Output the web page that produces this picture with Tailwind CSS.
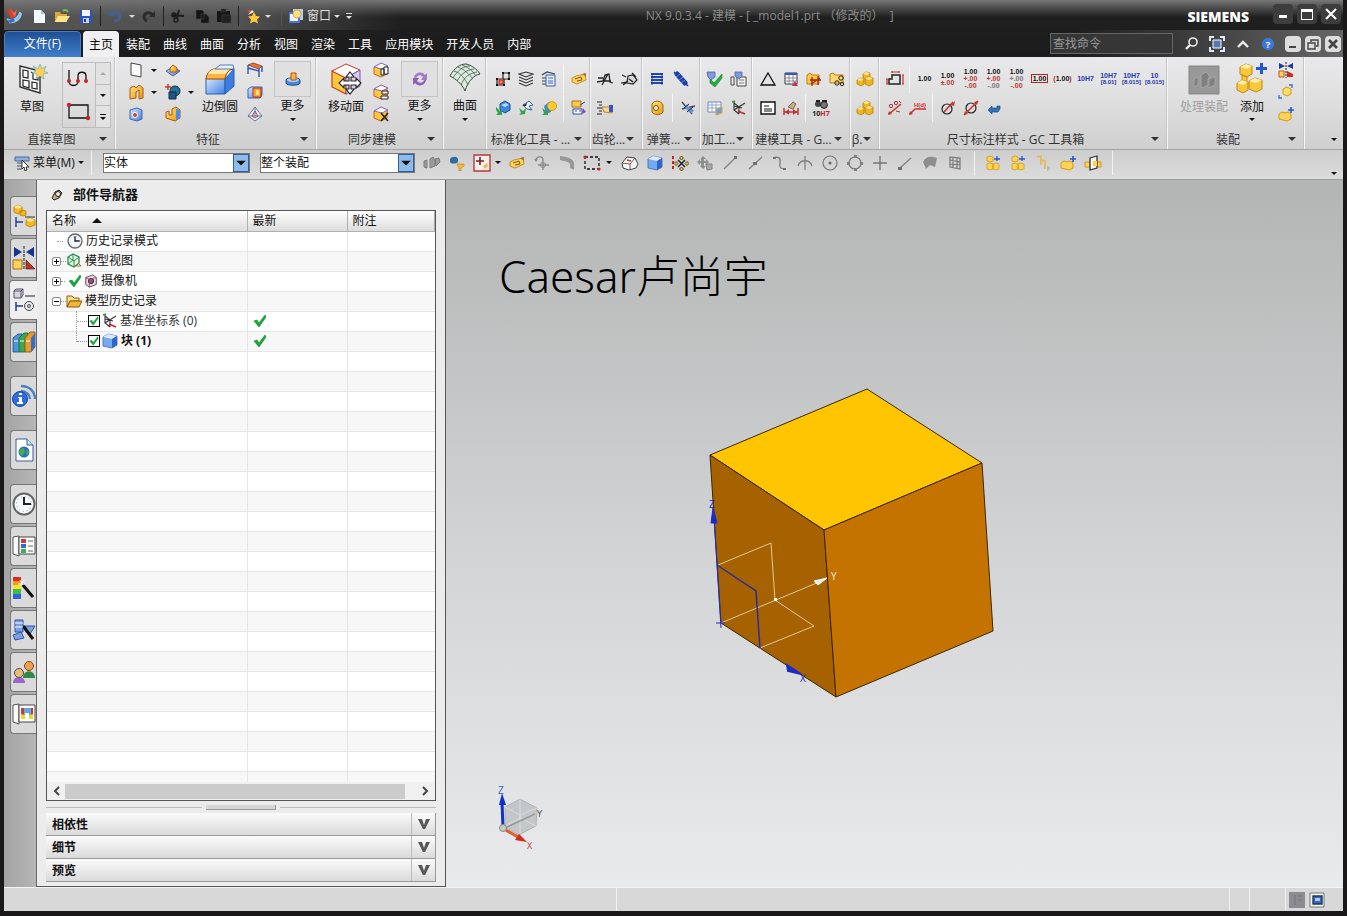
<!DOCTYPE html>
<html lang="zh-CN">
<head>
  <meta charset="UTF-8" />
  <meta name="viewport" content="width=device-width, initial-scale=1.0" />
  <title>NX 9.0.3.4 - 建模 - [_model1.prt （修改的） ]</title>
  <script src="https://cdn.jsdelivr.net/npm/@tailwindcss/browser@4"></script>
</head>
<body class="flex h-screen flex-col overflow-hidden bg-[#1a1819] px-1 pb-[5px] font-['Open_Sans','Noto_Sans_CJK_SC',sans-serif] text-xs text-[#111]">

<!-- icon sprite, kept rendered so its gradients stay usable -->
<svg class="absolute size-0" aria-hidden="true">
  <defs>
    <linearGradient id="gBlue" x1="0" y1="0" x2="1" y2="1"><stop offset="0" stop-color="#dcebff"/><stop offset="1" stop-color="#3f7fe0"/></linearGradient>
    <linearGradient id="gGold" x1="0" y1="0" x2="1" y2="1"><stop offset="0" stop-color="#ffe680"/><stop offset="1" stop-color="#e8960c"/></linearGradient>
  </defs>
  <symbol id="caret" viewBox="0 0 8 4"><path d="M0 0h8L4 4z" fill="currentColor"/></symbol>
  <symbol id="nx" viewBox="0 0 16 16"><path d="M1 11c4 3 12 0 13-7M3 14c6 1 12-3 12-9" stroke="#8fc4f5" stroke-width="2" fill="none"/><path d="M2 13l5-3 2 3-5 2z" fill="#2f6fc8"/><path d="M1 2l5-1 4 7-5 3z" fill="#d8402c"/><path d="M4 1l4 4 3-4-2 8z" fill="#f07050"/></symbol>
  <symbol id="new" viewBox="0 0 16 16"><path d="M3 2h7l4 4v9H3z" fill="#f4f9ff"/><path d="M10 2v4h4z" fill="#9cc0ea"/></symbol>
  <symbol id="open" viewBox="0 0 16 16"><path d="M1 4h5l1 2h6v8H1z" fill="#d9a63a"/><path d="M4 8h12l-4 6H1z" fill="#ffe28a"/><path d="M9 3c2-2 4-1 5 1" stroke="#7bbf4a" stroke-width="2" fill="none"/></symbol>
  <symbol id="save" viewBox="0 0 16 16"><path d="M2 2h12v13H2z" fill="#2c54c4"/><path d="M4 2h8v6H4z" fill="#f3f6ff"/><path d="M5 10h6v5H5z" fill="#c9d3ee"/><path d="M6 11h2v3H6z" fill="#223a80"/></symbol>
  <symbol id="undo" viewBox="0 0 16 16"><path d="M2 2v6h6z" fill="#44618f"/><path d="M4 7c4-5 9-3 9 1 0 3-3 5-6 5" fill="none" stroke="#44618f" stroke-width="3"/></symbol>
  <symbol id="redo" viewBox="0 0 16 16"><path d="M14 3v6H8z" fill="#2c2c2c"/><path d="M12 7C8 3 3 5 3 9c0 2 1 3 3 4" fill="none" stroke="#2c2c2c" stroke-width="3"/></symbol>
  <symbol id="cut" viewBox="0 0 16 16"><path d="M9 2L7 10M2 7l12 1" stroke="#1c1c1c" stroke-width="2"/><circle cx="6" cy="12" r="2" fill="none" stroke="#1c1c1c" stroke-width="1.5"/><circle cx="4" cy="7" r="2" fill="none" stroke="#1c1c1c" stroke-width="1.5"/></symbol>
  <symbol id="copy" viewBox="0 0 16 16"><path d="M2 2h6l2 2v7H2zM7 6h5l3 3v6H7z" fill="#151515" stroke="#4a4a4a" stroke-width=".6"/></symbol>
  <symbol id="paste" viewBox="0 0 16 16"><path d="M1 3h13v11H1z" fill="#171717"/><path d="M5 1h5v3H5zM6 7h9v8H6z" fill="#202020" stroke="#444" stroke-width=".5"/></symbol>
  <symbol id="star" viewBox="0 0 16 16"><path d="M2 2l6 1-3 3z" fill="#e04a2a"/><path d="M3 7l4-5 2 2" fill="#f3efe6"/><path d="M9 4l2 4 4 .5-3 3 1 4-4-2-4 2 1-4-3-3 4-.5z" fill="#ffc93a"/></symbol>
  <symbol id="win" viewBox="0 0 16 16"><path d="M5 1h10v11H5z" fill="#b7cdf5"/><path d="M1 4h11v11H1z" fill="#4e74d8"/><path d="M2 6h8v7H2z" fill="#eef3ff"/><circle cx="9" cy="6" r="4" fill="#ffe27a" stroke="#b98a10" stroke-width=".6"/></symbol>
  <symbol id="search" viewBox="0 0 16 16"><circle cx="10" cy="6" r="4" fill="none" stroke="#eee" stroke-width="1.6"/><path d="M7 9l-4 4" stroke="#eee" stroke-width="2.4"/></symbol>
  <symbol id="full" viewBox="0 0 16 16"><path d="M1 5V1h4M11 1h4v4M15 11v4h-4M5 15H1v-4" fill="none" stroke="#dfe9ff" stroke-width="2"/><path d="M4 4h8v8H4z" fill="#5577b5" stroke="#fff"/></symbol>
  <symbol id="help" viewBox="0 0 16 16"><circle cx="8" cy="8" r="7" fill="#3b78d8"/><text x="8" y="12" font-size="11" font-weight="700" text-anchor="middle" fill="#fff">?</text></symbol>

  <symbol id="sketch" viewBox="0 0 32 32"><path d="M4 3l20 5v22L4 24z" fill="#f2f2f2" stroke="#333" stroke-width="1.4"/><path d="M7 7l5 1v7l-5-1zM15 9l2 1v6l5 1v-4M7 17l6 1v7l-6-2zM16 19l5 1v6l-5-1z" fill="#fff" stroke="#222" stroke-width="1.2"/><path d="M24 1l2 5 4-3-2 5 4 2-5 1 1 5-4-3-4 3 1-5-5-1 4-2-3-5 5 3z" fill="#ffd24a" stroke="#4aa6e8" stroke-width=".6"/></symbol>
  <symbol id="spline" viewBox="0 0 26 22"><path d="M3 2v11c0 6 9 6 9 0V8c0-5 8-5 8 0v5" fill="none" stroke="#111" stroke-width="1.3"/><circle cx="3" cy="13" r="2" fill="#c8202c"/><circle cx="12" cy="13" r="2" fill="#c8202c"/><circle cx="20" cy="13" r="2" fill="#c8202c"/></symbol>
  <symbol id="rect" viewBox="0 0 26 20"><path d="M3 4h19v13H3z" fill="none" stroke="#111" stroke-width="1.3"/><circle cx="3" cy="4" r="2.2" fill="#c8202c"/><circle cx="22" cy="17" r="2.2" fill="#c8202c"/></symbol>
  <symbol id="plane" viewBox="0 0 16 16"><path d="M3 1l10 2v12L3 13z" fill="#fafafa" stroke="#444"/></symbol>
  <symbol id="extrude" viewBox="0 0 16 16"><path d="M2 4l4-2 2 2 3-3 4 3v10l-4 1V6L8 8v6l-6 1z" fill="url(#gGold)" stroke="#b0560c"/></symbol>
  <symbol id="hole" viewBox="0 0 16 16"><path d="M2 4l7-2 5 2v9l-5 2-7-2z" fill="url(#gBlue)" stroke="#3465b8"/><circle cx="7" cy="9" r="2.6" fill="#c84b3a" stroke="#fff"/></symbol>
  <symbol id="boss" viewBox="0 0 16 16"><path d="M1 9l7-4 7 4-7 5z" fill="url(#gBlue)" stroke="#3465b8"/><path d="M5 6l3-3 4 3v4H5z" fill="url(#gGold)" stroke="#b0560c"/></symbol>
  <symbol id="unite" viewBox="0 0 16 16"><circle cx="10" cy="7" r="5" fill="#2a6e98" stroke="#0c2f48"/><path d="M4 8h7v7H4z" fill="#1d5680" stroke="#0c2f48"/><path d="M0 3h6M3 0v6" stroke="#d13a1c" stroke-width="1.4"/></symbol>
  <symbol id="shell" viewBox="0 0 16 16"><path d="M1 6l3-1v4h3V3l4-2 4 3v8l-5 3-9-3z" fill="url(#gGold)" stroke="#b0560c"/><path d="M11 3l4 1v8l-4 2z" fill="#4f8ce8"/></symbol>
  <symbol id="blend" viewBox="0 0 32 32"><path d="M2 15h19v16H2z" fill="url(#gBlue)" stroke="#2860b0"/><path d="M21 16l9-10v17l-9 8z" fill="#3b7de0" stroke="#2860b0"/><path d="M2 16C3 9 7 6 11 6h19c-5 0-8 4-9 10z" fill="#ffb341" stroke="#8a4a00"/><path d="M4 11c2-4 5-5 8-5h17c-4 0-6 2-7 5z" fill="#ffe7a8"/><path d="M11 6l5-4h13l1 4z" fill="#e6f0fc" stroke="#2860b0" stroke-width=".8"/></symbol>
  <symbol id="draft" viewBox="0 0 16 16"><path d="M1 3l5-2 9 3-3 3z" fill="#e8743a" stroke="#7a3010" stroke-width=".7"/><path d="M1 3v9M12 7v8M1 6l11 3M15 4v6" stroke="#2d54b8" stroke-width="1.4"/></symbol>
  <symbol id="trim" viewBox="0 0 16 16"><path d="M1 5l3-2h11v8l-2 3H1z" fill="url(#gBlue)" stroke="#3465b8"/><path d="M6 4h8v9H6z" fill="#ff9f2e" stroke="#c22d1a"/><path d="M9 6h3v5H9z" fill="#ffe27a"/></symbol>
  <symbol id="scale" viewBox="0 0 16 16"><path d="M8 1l7 9-7 5-7-5z" fill="#eef3fb" stroke="#6a7a94"/><path d="M8 5l3 5-3 2-3-2z" fill="#f7e0d4" stroke="#c04830"/><path d="M8 1v9l7 0M8 10l-7 0" fill="none" stroke="#3465b8" stroke-width=".8"/></symbol>
  <symbol id="more" viewBox="0 0 16 16"><path d="M1 9c0-3 14-3 14 0v3c0 3-14 3-14 0z" fill="#4b86d8" stroke="#204c94"/><ellipse cx="8" cy="9" rx="6" ry="2" fill="#a9ccf8"/><path d="M6 2h5v7H6z" fill="#ffb341" stroke="#b0560c"/></symbol>
  <symbol id="moveface" viewBox="0 0 32 32"><path d="M2 8l14 7v16L2 24z" fill="#ffc83a" stroke="#c83a20" stroke-width="1.2"/><path d="M2 8l14-7 14 6-14 8z" fill="#fdfdfd" stroke="#c83a20"/><path d="M16 15l14-8v16l-14 8z" fill="#d9caf0" stroke="#7a56b0"/><path d="M20 9l4 5h-3v4h5v-3l5 5-5 5v-3h-5v4h3l-4 5-4-5h3v-4h-5v3l-5-5 5-5v3h5v-4h-3z" fill="#fff" stroke="#222" stroke-width="1.1"/></symbol>
  <symbol id="face" viewBox="0 0 16 16"><path d="M1 5l7-3 6 2v8l-6 3-7-3z" fill="#ffc83a" stroke="#d0602a"/><path d="M1 5l7-4 7 3-6 3z" fill="#fff" stroke="#8a60b8"/></symbol>
  <symbol id="refresh" viewBox="0 0 20 20"><path d="M4 9c1-6 8-7 11-3l2-2v7h-6l2-3c-3-3-6-2-7 2z" fill="#a07cc8"/><path d="M16 11c-1 6-8 7-11 3l-2 2V9h6l-2 3c3 3 6 2 7-1z" fill="#8a62b8"/></symbol>
  <symbol id="surface" viewBox="0 0 32 32"><path d="M1 14C5 6 11 2 17 2c5 1 11 5 14 10-6 1-12 7-15 17C13 22 7 17 1 14z" fill="#dcebdf" stroke="#3a4a3c"/><path d="M5 9c7 2 11 8 14 14M9 5c7 3 11 7 15 12M13 3c6 2 11 6 14 11M4 16C8 9 14 4 21 4M8 19C12 12 17 8 25 7M12 23c3-8 9-12 16-13" fill="none" stroke="#4d5a4f" stroke-width=".8"/></symbol>

  <symbol id="attr" viewBox="0 0 16 16"><path d="M8 2h6v6H8zM2 8h7v6H2z" fill="none" stroke="#222" stroke-width="1.2"/><path d="M4 9h4v4H4z" fill="#f08040" stroke="#c22"/><path d="M7 1h2v2H7zM13 1h2v2h-2zM13 7h2v2h-2zM1 7h2v2H1zM1 13h2v2H1zM8 13h2v2H8z" fill="#111"/></symbol>
  <symbol id="layers" viewBox="0 0 16 16"><path d="M1 3l7-2 7 2-7 3zM1 6l7 3 7-3M1 9l7 3 7-3M1 12l7 3 7-3" fill="none" stroke="#333" stroke-width="1.1"/></symbol>
  <symbol id="layerdoc" viewBox="0 0 16 16"><path d="M1 4l5-3 8 2M1 7h4M1 10h4M1 13h4" fill="none" stroke="#345" stroke-width="1.2"/><path d="M5 4h9v11H5z" fill="#e3ecfb" stroke="#3e5f9e"/><path d="M7 7h5M7 10h5M7 12h5" stroke="#3e6fc0"/></symbol>
  <symbol id="hand" viewBox="0 0 16 16"><path d="M1 7l4-2 9-2 1 6-9 4-5-2z" fill="#ffd35a" stroke="#b77c10" stroke-width=".8"/><path d="M4 8l6-2 1 3-5 1" stroke="#8a5a10" fill="none"/><path d="M11 3l4-1v4z" fill="#9c7440"/></symbol>
  <symbol id="greenblue" viewBox="0 0 16 16"><path d="M5 4l5-3 5 3v6l-5 3-5-3z" fill="#3d86dd" stroke="#1c4f98"/><path d="M6 5l5-2 3 2-4 2z" fill="#b4d8ff"/><path d="M1 7l4 4 2-2v6H1l2-2-2-3z" fill="#35a34a"/></symbol>
  <symbol id="greengold" viewBox="0 0 16 16"><path d="M3 6l5-4 2 4v6l-5 2z" fill="#3d86dd"/><circle cx="11" cy="6" r="4.500" fill="#ffca2e" stroke="#d39a10"/><path d="M1 8l4 3 2-2v6H1l2-2z" fill="#35a34a"/></symbol>
  <symbol id="greenwing" viewBox="0 0 16 16"><path d="M5 5l6-4 4 4-4 1 3 4-5-1z" fill="#eef4ff" stroke="#2a5fb4"/><path d="M4 6l5-3-1 3z" fill="#222"/><path d="M1 8l4 3 3-3-1 6-6 1 2-2z" fill="#35a34a"/></symbol>
  <symbol id="export" viewBox="0 0 16 16"><path d="M1 1h9v6H1z" fill="#ffca4a" stroke="#b0700c"/><path d="M2 9h9v5H2z" fill="#fff" stroke="#2846a8"/><path d="M4 11h2M8 11h2M9 5l5-3" stroke="#2846a8"/><path d="M12 8l3 4-4 2z" fill="#8a50b8"/></symbol>
  <symbol id="gear1" viewBox="0 0 18 16"><path d="M1 11l6-1 2-6 4-1 1 8 3 1M2 7h5M6 14l6-11M8 10h7" fill="none" stroke="#222" stroke-width="1.3"/></symbol>
  <symbol id="gear2" viewBox="0 0 18 16"><path d="M2 4l4 2M1 12l6-1 1-6 5-1 4 5-4 4-6-1z" fill="#d8d8d8" stroke="#222" stroke-width="1.2"/><path d="M3 14l5-4M12 2l4 4M9 8l4 3" stroke="#222" stroke-width="1.3"/></symbol>
  <symbol id="gearfind" viewBox="0 0 18 16"><path d="M1 2h5M3 5h3M1 8h5M3 11h3M1 14h5" stroke="#222" stroke-width="1.2"/><path d="M6 7h7l3-2v8l-8-1z" fill="#ffd78a" stroke="#a0702a" stroke-width=".8"/><path d="M13 5h4v7h-4z" fill="#3a55c0"/></symbol>
  <symbol id="spring" viewBox="0 0 16 16"><path d="M2 3h12M2 6h12M2 9h12M2 12h12" stroke="#2247b8" stroke-width="2"/><path d="M3 2v12M13 2v12" stroke="#16307c" stroke-width=".8"/></symbol>
  <symbol id="spring2" viewBox="0 0 16 16"><path d="M4 3l8 9" stroke="#1c3fa8" stroke-width="5" stroke-linecap="round"/><path d="M3 6l4-3M6 9l4-3M8 12l4-3" stroke="#7fa0f0" stroke-width=".8"/><path d="M1 1l2 2M13 13l2 2" stroke="#1c3fa8" stroke-width="1.5"/></symbol>
  <symbol id="disc" viewBox="0 0 16 16"><path d="M3 4c2-4 9-4 11 1v7c-3 4-9 3-11 0z" fill="url(#gGold)" stroke="#9a6a08"/><circle cx="7" cy="8" r="2.500" fill="#fff3c8" stroke="#7a4a00"/></symbol>
  <symbol id="delspring" viewBox="0 0 16 16"><path d="M2 2l10 12M15 6L2 9" stroke="#445" stroke-width="1.3"/><path d="M5 6l8 6" stroke="#6a9ad0" stroke-width="4"/><path d="M4 8l5-4M7 12l6-5" stroke="#223"/></symbol>
  <symbol id="chkgreen" viewBox="0 0 18 16"><path d="M1 1h8v5l-4 3-3-3z" fill="#7f9be0" stroke="#4456a0" stroke-width=".7"/><path d="M4 8l4 4 8-9v4l-7 9-5-4z" fill="#1fb03c" stroke="#108028" stroke-width=".6"/></symbol>
  <symbol id="cadimg" viewBox="0 0 18 16"><path d="M1 6h3v8H1zM7 6h9v9H7z" fill="#f2f2f2" stroke="#444"/><path d="M9 9h5M9 12h5" stroke="#777"/><path d="M5 1h7v4l-3 3-4-3z" fill="#7f9be0" stroke="#4456a0" stroke-width=".7"/></symbol>
  <symbol id="grid" viewBox="0 0 16 16"><path d="M1 2h13v10H1z" fill="#fff" stroke="#6c86c0"/><path d="M1 5h13M1 8h13M5 2v10M9 2v10" stroke="#8fa6d8"/><path d="M9 9l6-2v6l-6 2z" fill="#6aa2e8" stroke="#e8a020"/></symbol>
  <symbol id="csys" viewBox="0 0 16 16"><path d="M3 1v9l5 4M3 10l11-7M3 3l5 4v7M3 6l8 2" fill="none" stroke="#333" stroke-width="1.1"/><path d="M7 11l7 3" stroke="#c8202c" stroke-width="1.4"/><path d="M1 2l3-1" stroke="#2a9a3a" stroke-width="1.4"/></symbol>
  <symbol id="tri" viewBox="0 0 16 16"><path d="M8 2l7 12H1z" fill="none" stroke="#111" stroke-width="1.3"/></symbol>
  <symbol id="tbl" viewBox="0 0 16 16"><path d="M2 2h12v11H2z" fill="#fff" stroke="#334"/><path d="M2 3h12" stroke="#2b5cc8" stroke-width="2"/><path d="M2 7h12M2 10h12M6 4v9M10 4v9" stroke="#889"/><path d="M9 15l3-5 3 5z" fill="#c8303c"/></symbol>
  <symbol id="orgpart" viewBox="0 0 16 16"><path d="M1 4l3-2 2 2h7v9H1z" fill="#ffca4a" stroke="#c07a10"/><path d="M6 6v9M12 5v9M4 9h11M5 13l9-6" stroke="#a02810" stroke-width="1.3"/></symbol>
  <symbol id="cfgpart" viewBox="0 0 16 16"><path d="M1 3l3-1 2 2h8v8H1z" fill="#ffd873" stroke="#c07a10"/><circle cx="12" cy="7" r="2.200" fill="none" stroke="#222"/><circle cx="8" cy="12" r="2.200" fill="none" stroke="#222"/><circle cx="13" cy="13" r="1.700" fill="none" stroke="#222"/></symbol>
  <symbol id="note" viewBox="0 0 16 16"><path d="M1 2h14v12H1z" fill="#fff" stroke="#111" stroke-width="1.4"/><path d="M4 6h5M4 9h8M4 11h8" stroke="#111"/></symbol>
  <symbol id="dimbrush" viewBox="0 0 16 16"><path d="M1 8v7M15 8v7M1 12h14" stroke="#c8302c" stroke-width="1.5"/><path d="M2 12l4-3v6zM14 12l-4-3v6z" fill="#c8302c"/><path d="M5 7l5-5 3 2-3 5z" fill="#d0b068" stroke="#6a6a6a"/></symbol>
  <symbol id="find10" viewBox="0 0 18 18"><circle cx="6" cy="5" r="3" fill="#444"/><circle cx="12" cy="6" r="3.400" fill="#777" stroke="#222"/><path d="M4 2h4M10 2h5" stroke="#222" stroke-width="2"/><text x="9" y="17" font-size="7" font-weight="700" text-anchor="middle"><tspan fill="#222">10</tspan><tspan fill="#c8202c">H7</tspan></text></symbol>
  <symbol id="cubes" viewBox="0 0 18 16"><path d="M7 3l3-2 4 1v5l-3 2-4-2zM1 9l3-2 4 1v5l-3 2-4-2zM9 8l3-2 5 1v6l-4 2-4-2z" fill="#f2b51c" stroke="#b87c08" stroke-width=".8"/><path d="M7 3l3-2 4 1-3 2zM1 9l3-2 4 1-3 2zM9 8l3-2 5 1-4 2z" fill="#ffe796"/></symbol>
  <symbol id="dimstep" viewBox="0 0 18 16"><path d="M6 4v4H3v5h11V4z" fill="none" stroke="#222" stroke-width="1.5"/><path d="M6 1h7M6 0v2M13 0v2M1 8v5M17 4v9M0 8h2M0 13h2M16 4h2M16 13h2" stroke="#c8302c" stroke-width="1.2"/></symbol>
  <symbol id="dimang" viewBox="0 0 16 16"><path d="M2 14L14 4" stroke="#c8302c" stroke-width="1.6"/><path d="M1 15l1-4 3 3z" fill="#c8302c"/><circle cx="4" cy="6" r="1.700" fill="none" stroke="#b03028"/><circle cx="9" cy="3" r="1.700" fill="none" stroke="#b03028"/><path d="M9 11l4 1M12 1l2 2" stroke="#b03028"/></symbol>
  <symbol id="dimlead" viewBox="0 0 18 16"><path d="M1 14l5-5h11" fill="none" stroke="#c8302c" stroke-width="1.5"/><path d="M0 15l1-4 3 3z" fill="#c8302c"/><text x="11" y="7" font-size="6" font-weight="700" text-anchor="middle" fill="#c8302c">H(d)</text></symbol>
  <symbol id="dia1" viewBox="0 0 16 16"><circle cx="7" cy="9" r="5" fill="none" stroke="#222" stroke-width="1.200"/><path d="M4 12l9-10" stroke="#c8302c" stroke-width="1.600"/><path d="M11 5l4-4-1 5z" fill="#c8302c"/></symbol>
  <symbol id="dia2" viewBox="0 0 16 16"><circle cx="8" cy="8" r="5" fill="none" stroke="#222" stroke-width="1.200"/><path d="M1 15L15 1" stroke="#c8302c" stroke-width="1.500"/><path d="M11 2l4-1-1 4zM1 15l1-4 3 3z" fill="#c8302c"/></symbol>
  <symbol id="swap" viewBox="0 0 16 16"><path d="M2 10l4-4v2h5V6h3v3l-2 3H6v2z" fill="#2f74b8" stroke="#174a80" stroke-width=".7"/></symbol>
  <symbol id="asmadd" viewBox="0 0 32 32"><path d="M4 5l6-3 6 2v8l-5 3-7-3zM1 21l5-3 6 2v8l-5 3-6-3zM13 19l6-3 7 2v9l-6 3-7-3zM6 13l5 2v6l-5-2z" fill="#f7c83c" stroke="#c08a10"/><path d="M4 5l6-3 6 2-5 3zM1 21l5-3 6 2-5 3zM13 19l6-3 7 2-6 3z" fill="#fff0b0"/><path d="M24 1h3v4h4v3h-4v4h-3V8h-4V5h4z" fill="#2458d0"/></symbol>
  <symbol id="mirror" viewBox="0 0 16 16"><path d="M1 1l6 3-6 3zM15 1L9 4l6 3z" fill="#1b3c9c"/><path d="M8 0v16" stroke="#222" stroke-dasharray="2 1"/><path d="M1 9h5v6H1z" fill="#ffd35a" stroke="#c8501c"/><path d="M9 9l6 3v3H9z" fill="#c8301c"/></symbol>
  <symbol id="rotcube" viewBox="0 0 16 16"><path d="M5 5l4-2 4 2v5l-4 2-4-2z" fill="#ffdb6a" stroke="#d39a10"/><path d="M11 1h3v3M1 11v3h3" fill="none" stroke="#3a68c8" stroke-width="1.300"/></symbol>
  <symbol id="cubeplus" viewBox="0 0 16 16"><path d="M1 8l3-2 3 1 3-1 3 2v5l-4 2-4-1-4-1z" fill="#ffd35a" stroke="#d39a10"/><path d="M13 1v6M10 4h6" stroke="#2458d0" stroke-width="1.600"/></symbol>

  <symbol id="menu" viewBox="0 0 16 16"><path d="M1 2h14v4H1z" fill="#8fb0dc" stroke="#4a6a9c"/><path d="M3 8h5M3 11h5M3 14h5" stroke="#456" stroke-width="1.200"/><path d="M8 5l7 7h-3l1 3-2 1-1-4-2 2z" fill="#fff" stroke="#222" stroke-width=".9"/></symbol>
  <symbol id="grayasm" viewBox="0 0 18 16"><path d="M1 6l3-1v8l-3-1zM7 4l3-2 2 3v6l-5 2zM12 4l4-1 1 4-4 4z" fill="#9a9a9a" stroke="#7d7d7d"/></symbol>
  <symbol id="bluegold" viewBox="0 0 16 16"><path d="M1 4c2-3 7-3 8 0v3c-2 2-7 2-8 0z" fill="#2f6d9c"/><path d="M8 9h7v2l-3 2v3h-2v-3z" fill="#ffb341" stroke="#c67c10" stroke-width=".6"/></symbol>
  <symbol id="redbox" viewBox="0 0 18 18"><path d="M1 1h16v16H1z" fill="#f7eeee" stroke="#b83a3a" stroke-width="1.400"/><path d="M7 3v8M3 7h8" stroke="#7a2020" stroke-width="1.600"/><path d="M10 12l4-3 1 3-3 3z" fill="#ffb341"/></symbol>
  <symbol id="anchor" viewBox="0 0 16 16"><path d="M2 4c2-3 7-3 7 1v10M4 10h11" fill="none" stroke="#8c8c8c" stroke-width="1.400"/><circle cx="9" cy="10" r="2.600" fill="none" stroke="#8c8c8c"/><path d="M0 4h4l-2 3z" fill="#8c8c8c"/></symbol>
  <symbol id="bend" viewBox="0 0 16 16"><path d="M1 1l6 1c4 1 8 3 8 7v6l-4-2V9C9 6 5 6 1 5z" fill="#979797"/></symbol>
  <symbol id="marquee" viewBox="0 0 18 16"><path d="M2 2h14v12H2z" fill="none" stroke="#111" stroke-width="1.300" stroke-dasharray="3 2"/><circle cx="2" cy="2" r="1.600" fill="#c22"/><circle cx="16" cy="14" r="1.600" fill="#c22"/></symbol>
  <symbol id="wirecube" viewBox="0 0 18 16"><path d="M1 8l5-6 8 1 3 6-2 4-7 2-6-2z" fill="#f4f4f4" stroke="#444"/><path d="M1 8l8 1 5-6M9 9v5" fill="none" stroke="#666"/><path d="M6 5l4 1" stroke="#c83a2c" stroke-width="1.600"/></symbol>
  <symbol id="bcube" viewBox="0 0 16 16"><path d="M1 4l5-3 9 2v9l-5 3-9-2z" fill="#74aaf0" stroke="#3a68b8" stroke-width=".8"/><path d="M1 4l5-3 9 2-5 3z" fill="#dceaff"/><path d="M10 6l5-3v9l-5 3z" fill="#2f66cc"/></symbol>
  <symbol id="snap" viewBox="0 0 18 16"><path d="M2 1v14" stroke="#c22" stroke-width="2" stroke-dasharray="3 2"/><path d="M7 5l7 7M14 5l-7 7" stroke="#222" stroke-width="1.500"/><g fill="#f0c030" stroke="#222" stroke-width=".8"><path d="M10.500 1l2 2-2 2-2-2zM10.500 12l2 2-2 2-2-2zM5 6.500l2 2-2 2-2-2zM16 6.500l2 2-2 2-2-2z"/></g></symbol>
  <symbol id="gmove" viewBox="0 0 16 16"><path d="M6 1l3 3H7v2h2V4l3 3-3 3V8H7v3h2l-3 3-3-3h1V8H3v2L0 7l3-3v2h1V4H3z" fill="#8f8f8f"/><path d="M9 9h6v5l-5 1z" fill="#a8a8a8" stroke="#808080"/></symbol>
  <symbol id="line1" viewBox="0 0 16 16"><path d="M2 14L13 3" stroke="#808080" stroke-width="1.300"/><path d="M12 1h3v3h-3z" fill="#707070"/></symbol>
  <symbol id="line2" viewBox="0 0 16 16"><path d="M2 14L15 2" stroke="#808080" stroke-width="1.300"/><path d="M6 7h4v3H6z" fill="#707070"/></symbol>
  <symbol id="linept" viewBox="0 0 16 16"><path d="M3 13L14 3" stroke="#808080" stroke-width="1.300"/><path d="M1 12h4v3H1z" fill="#707070"/></symbol>
  <symbol id="curve" viewBox="0 0 16 16"><path d="M1 3c6-2 8 0 7 5s1 6 6 6" fill="none" stroke="#808080" stroke-width="1.300"/><path d="M1 2h3v2H1zM11 13h3v2h-3z" fill="#707070"/></symbol>
  <symbol id="arrowup" viewBox="0 0 16 16"><path d="M8 1v14M1 11c2-7 12-7 14 0" fill="none" stroke="#808080" stroke-width="1.300"/></symbol>
  <symbol id="target" viewBox="0 0 16 16"><circle cx="8" cy="8" r="7" fill="none" stroke="#777" stroke-width="1.200"/><circle cx="8" cy="8" r="1.500" fill="#666"/></symbol>
  <symbol id="quad" viewBox="0 0 16 16"><circle cx="8" cy="8" r="6" fill="none" stroke="#777" stroke-width="1.200"/><path d="M7 0h3v3H7zM7 13h3v3H7zM0 7h3v3H0zM13 7h3v3h-3z" fill="#808080"/></symbol>
  <symbol id="cross" viewBox="0 0 16 16"><path d="M8 1v14M1 8h14" stroke="#777" stroke-width="1.400"/></symbol>
  <symbol id="gface" viewBox="0 0 16 16"><path d="M1 7c3-6 8-6 14-4l-2 9-5-2-4 4z" fill="#8e8e8e"/></symbol>
  <symbol id="ggrid" viewBox="0 0 16 16"><path d="M3 2l10 1v11L3 12zM3 5l10 2M3 9l10 1M6 2v11M10 3v11" fill="none" stroke="#777" stroke-width="1.200"/></symbol>
  <symbol id="gasm" viewBox="0 0 16 16"><path d="M2 2l3-1 3 1v4l-3 1-3-1zM2 9l3-1 3 1v5l-3 1-3-1zM8 9l3-1 3 1v5l-3 1-3-1z" fill="#ffd250" stroke="#cf9a18" stroke-width=".8"/><path d="M12 1v5M9 4h6" stroke="#2458d0" stroke-width="1.300"/></symbol>
  <symbol id="pale" viewBox="0 0 16 16"><path d="M2 2l4-1v4l4 1v8M6 5v5" fill="none" stroke="#e3bb62" stroke-width="2"/><path d="M12 11l3 1v3l-3 1z" fill="#b9bcc4"/></symbol>
  <symbol id="gframe" viewBox="0 0 18 16"><path d="M1 7h5v5H1zM11 7h6v5h-6z" fill="#ffd250" stroke="#cf9a18"/><path d="M6 3l7-2v12l-7 2z" fill="#f4f4f4" stroke="#333" stroke-width="1.300"/><path d="M9 6h4v5H9z" fill="#ffd250"/></symbol>

  <symbol id="r-asm" viewBox="0 0 24 24"><path d="M2 3l4-2 4 2v5l-4 2-4-2zM8 7l3-1 3 1v4l-3 1-3-1zM14 16l4-2 5 2v5l-5 2-4-2z" fill="#f4b820" stroke="#b87c08" stroke-width=".8"/><path d="M2 3l4-2 4 2-4 2zM14 16l4-2 5 2-5 2z" fill="#ffe796"/><path d="M13 13h10" stroke="#333"/><path d="M4 13v10M4 18h7" stroke="#1b3c9c" stroke-width="1.400" fill="none"/></symbol>
  <symbol id="r-con" viewBox="0 0 24 24"><path d="M2 1l8 5-8 5zM22 1l-8 5 8 5z" fill="#17358f"/><path d="M12 0v24" stroke="#222" stroke-dasharray="3 1"/><path d="M1 14h9v9H1z" fill="#ffd35a" stroke="#a86a10"/><path d="M14 14l9 9h-9z" fill="#c8301c" stroke="#222" stroke-width=".6"/></symbol>
  <symbol id="r-part" viewBox="0 0 24 24"><path d="M2 3l2-2h7v6l-2 3H2z" fill="#d5d5e2" stroke="#5a5068"/><path d="M2 3h7v7M9 3l2-2" fill="none" stroke="#5a5068"/><path d="M13 8h10" stroke="#222"/><path d="M4 14v9M4 18h7" stroke="#1b3c9c" stroke-width="1.500" fill="none"/><circle cx="17" cy="18" r="4.500" fill="#eee" stroke="#444"/><circle cx="17" cy="18" r="1.500" fill="none" stroke="#444"/></symbol>
  <symbol id="r-lib" viewBox="0 0 24 24"><path d="M1 8l5-4h4v15l-3 3H1z" fill="#4f93dd" stroke="#1e4e90" stroke-width=".8"/><path d="M7 8l5-5h4v15l-3 4H7z" fill="#39a84e" stroke="#1a6a2c" stroke-width=".8"/><path d="M13 8l5-6h5v15l-4 5h-6z" fill="#e89a2c" stroke="#8a4c08" stroke-width=".8"/><path d="M19 8l4-5v14l-4 5z" fill="#2f6fd0"/><path d="M2 11h4M8 11h4M14 11h4" stroke="#fff"/></symbol>
  <symbol id="r-info" viewBox="0 0 24 24"><path d="M9 2c8 0 14 5 14 13M9 7c5 0 9 4 9 8" fill="none" stroke="#4d7fc0" stroke-width="2.400"/><circle cx="8" cy="15" r="7.500" fill="#2f6ae0" stroke="#1a48a8"/><path d="M7 9h3v2H7zM6 13h4v5h1v2H5v-2h2v-4H6z" fill="#fff"/></symbol>
  <symbol id="r-web" viewBox="0 0 24 24"><path d="M4 1h11l6 6v16H4z" fill="#fff" stroke="#3a5f9c"/><path d="M15 1v6h6" fill="#cfe0f5" stroke="#3a5f9c"/><circle cx="12" cy="14" r="5.500" fill="#2f6fc0"/><path d="M8 11l4-1 1 4-3 4-3-3zM14 12l3 1-1 4-2-1z" fill="#3fae50"/></symbol>
  <symbol id="clock" viewBox="0 0 24 24"><circle cx="12" cy="12" r="10.500" fill="#f5f8fc" stroke="#666" stroke-width="2"/><circle cx="12" cy="12" r="7.500" fill="none" stroke="#89a" stroke-dasharray="1 3"/><path d="M12 5v7h7" fill="none" stroke="#222" stroke-width="2"/></symbol>
  <symbol id="r-pal" viewBox="0 0 24 24"><path d="M1 3l6-1v20l-6-2z" fill="#fafafa" stroke="#555"/><path d="M7 3h16v17H7z" fill="#fff" stroke="#444"/><path d="M9 5h5v4H9z" fill="#d03a2a"/><path d="M9 10h5v4H9z" fill="#2f6fd0"/><path d="M9 15h5v4H9z" fill="#3fae50"/><path d="M16 7h5M16 12h5M16 17h5" stroke="#666"/></symbol>
  <symbol id="r-color" viewBox="0 0 24 24"><path d="M1 1h8v4H1z" fill="#e02a1a"/><path d="M1 5h8v4H1z" fill="#f59a1c"/><path d="M1 9h8v4H1z" fill="#f2e62c"/><path d="M1 13h8v5H1z" fill="#3cc040"/><path d="M1 18h8v5H1z" fill="#2e62e0"/><path d="M10 8l11 13" stroke="#111" stroke-width="3"/><path d="M8 4l3 5M12 4l-3 6M6 8h7" stroke="#fff"/></symbol>
  <symbol id="r-proc" viewBox="0 0 24 24"><path d="M3 2h8v12H3zM1 17l8-3 3 6-9 2zM13 8h10l-5 8z" fill="#7ba0e0" stroke="#2f54a8"/><path d="M11 8l10 13" stroke="#111" stroke-width="3"/><path d="M3 5h8M3 9h8" stroke="#fff"/></symbol>
  <symbol id="r-role" viewBox="0 0 24 24"><path d="M11 18c0-9 12-9 12 0z" fill="#2f8a4a"/><circle cx="17" cy="6" r="4.500" fill="#f0a050" stroke="#8a4410"/><path d="M1 23c0-8 12-8 12 0z" fill="#9a68c8"/><circle cx="7" cy="13" r="4.500" fill="#e8c070" stroke="#5a4460"/></symbol>
  <symbol id="r-sys" viewBox="0 0 24 24"><path d="M1 3l6-1v20l-6-2z" fill="#fafafa" stroke="#555"/><path d="M7 3h16v17H7z" fill="#fff" stroke="#444"/><path d="M9 6h12v11H9z" fill="#d03a2a"/><path d="M12 6h7v11h-7z" fill="#5aa8f0"/><path d="M9 12l4 1v4H9zM17 13l4-1v5h-4z" fill="#f2d62c"/><path d="M13 11h4v6h-4z" fill="#fff"/></symbol>

  <symbol id="pin" viewBox="0 0 12 12"><path d="M1 9l3-6 4-2 3 3-3 5-5 2z" fill="#b9ab82" stroke="#222"/><circle cx="7" cy="5" r="2.500" fill="#f3edd5" stroke="#222"/></symbol>
  <symbol id="mview" viewBox="0 0 16 16"><path d="M2 4l5-3 6 3v6l-5 4-6-3z" fill="#e6f7ea" stroke="#22924a" stroke-width="1.300"/><path d="M2 4l6 4 5-4M8 8v6M2 11l5-4V1" fill="none" stroke="#22924a"/><path d="M9 13h6l-3-3" fill="none" stroke="#c8602c"/></symbol>
  <symbol id="check" viewBox="0 0 14 14"><path d="M1 7l3-1 2 3 6-8 1 2-7 10z" fill="#17a83c" stroke="#0e8a2c" stroke-width=".600"/></symbol>
  <symbol id="camera" viewBox="0 0 16 16"><path d="M2 4l8-3 4 3v8l-8 3-4-3z" fill="#e6dfe6" stroke="#5a3048"/><circle cx="8" cy="8" r="3" fill="#7a5a9c" stroke="#222"/><path d="M2 4l4 2v9M6 6l8-2" fill="none" stroke="#c03a3a"/></symbol>
  <symbol id="folder" viewBox="0 0 16 16"><path d="M1 3h5l2 2h5v3H4l-3 6z" fill="#ffe08a" stroke="#8a5c10"/><path d="M4 8h12l-3 6H1z" fill="#f2b637" stroke="#8a5c10"/></symbol>
  <symbol id="chev" viewBox="0 0 12 10"><path d="M0 0h4l2 6 2-6h4L7 10H5z" fill="#555"/></symbol>
</svg>

<!-- title bar -->
<header class="bg-linear-to-b from-[#777] via-[#202020] via-30% to-[#1b1b1b] text-[#ddd]">
  <div class="flex h-[30px] items-center">
    <div class="flex h-full items-center bg-linear-to-r from-[#777]/60 via-[#666]/70 via-60% to-transparent pt-0.5 pr-12 pl-0.5">
      <svg class="mr-[9px] size-4"><use href="#nx"/></svg>
      <button aria-label="新建" class="mr-[7px]"><svg class="size-4"><use href="#new"/></svg></button>
      <button aria-label="打开" class="mr-2"><svg class="size-4"><use href="#open"/></svg></button>
      <button aria-label="保存"><svg class="size-4"><use href="#save"/></svg></button>
      <span class="mx-1.5 h-5 w-px bg-[#222]"></span>
      <button aria-label="撤销"><svg class="size-4"><use href="#undo"/></svg></button>
      <svg class="mx-1.5 h-[3px] w-1.5"><use href="#caret"/></svg>
      <button aria-label="重做"><svg class="size-4"><use href="#redo"/></svg></button>
      <span class="mx-1.5 h-5 w-px bg-[#222]"></span>
      <button aria-label="剪切" class="mr-2"><svg class="size-4"><use href="#cut"/></svg></button>
      <button aria-label="复制" class="mr-1.5"><svg class="size-4"><use href="#copy"/></svg></button>
      <button aria-label="粘贴"><svg class="size-4"><use href="#paste"/></svg></button>
      <span class="mx-1.5 h-5 w-px bg-[#222]"></span>
      <button aria-label="收藏"><svg class="size-4"><use href="#star"/></svg></button>
      <svg class="mx-1 h-[3px] w-1.5"><use href="#caret"/></svg>
      <span class="mx-1.5 h-5 w-px bg-[#555]"></span>
      <button class="flex items-center gap-[3px]"><svg class="size-4"><use href="#win"/></svg>窗口<svg class="h-[3px] w-1.5"><use href="#caret"/></svg></button>
      <button aria-label="工具条选项" class="ml-1.5 border-t border-[#ddd] pt-0.5"><svg class="h-[3px] w-1.5"><use href="#caret"/></svg></button>
    </div>
    <h1 class="-ml-12 flex-1 pt-0.5 text-center whitespace-pre text-[#8b8b8b]">NX 9.0.3.4 - 建模 - [ _model1.prt （修改的）  ]</h1>
    <span class="mr-6 pt-1 text-sm font-extrabold text-white">SIEMENS</span>
    <div class="flex gap-1 pr-0.5 pb-0.5">
      <button aria-label="最小化" class="flex size-5 items-end justify-center rounded-sm bg-[#3d3d3d] pb-1.5"><span class="h-[3px] w-2 bg-white"></span></button>
      <button aria-label="最大化" class="flex size-5 items-center justify-center rounded-sm bg-[#3d3d3d]"><span class="h-[11px] w-3 border border-t-3 border-white"></span></button>
      <button aria-label="关闭" class="flex size-5 items-center justify-center rounded-sm bg-[#3d3d3d]"><svg class="size-3" viewBox="0 0 12 12"><path d="M1 1l10 10M11 1L1 11" stroke="#fff" stroke-width="2"/></svg></button>
    </div>
  </div>
  <div class="flex h-[27px] items-end bg-linear-to-r from-transparent from-80% to-[#666]">
    <button class="h-[26px] w-[77px] rounded-t-sm border border-[#4a7cc0] bg-linear-to-b from-[#1f5097] to-[#3f7cc8] text-white">文件(F)</button>
    <nav class="flex flex-1 items-end gap-px pl-0.5 *:h-[26px] *:px-1.5 *:pt-0.5 *:whitespace-nowrap *:text-white">
      <button class="rounded-t-sm bg-[#f0f0f0] text-black!">主页</button>
      <button>装配</button>
      <button>曲线</button>
      <button>曲面</button>
      <button>分析</button>
      <button>视图</button>
      <button>渲染</button>
      <button>工具</button>
      <button>应用模块</button>
      <button>开发人员</button>
      <button>内部</button>
    </nav>
    <input type="text" placeholder="查找命令" aria-label="查找命令" class="mb-[3px] h-[21px] w-[123px] border border-[#666] bg-[#363636] px-0.5 placeholder:text-[#999]" />
    <div class="mb-[3px] flex h-5 items-center pr-0.5 pl-2.5 [&>button]:mr-2.5">
      <button aria-label="搜索"><svg class="size-4"><use href="#search"/></svg></button>
      <button aria-label="全屏"><svg class="size-4"><use href="#full"/></svg></button>
      <button aria-label="最小化功能区"><svg class="size-4" viewBox="0 0 16 16"><path d="M3 11l5-5 5 5" fill="none" stroke="#eee" stroke-width="2.400"/></svg></button>
      <button aria-label="帮助"><svg class="size-[14px]"><use href="#help"/></svg></button>
      <div class="flex gap-1 *:flex *:size-4 *:items-center *:justify-center *:rounded-sm *:bg-[#ddd]">
        <button aria-label="最小化窗口"><svg class="size-3" viewBox="0 0 12 12"><path d="M2 9h7" stroke="#444" stroke-width="2"/></svg></button>
        <button aria-label="还原窗口"><svg class="size-3" viewBox="0 0 12 12"><path d="M4 4V2h7v6H9M1 5h7v6H1z" fill="none" stroke="#444" stroke-width="1.400"/></svg></button>
        <button aria-label="关闭窗口"><svg class="size-3" viewBox="0 0 12 12"><path d="M2 2l8 8M10 2l-8 8" stroke="#444" stroke-width="2.600"/></svg></button>
      </div>
    </div>
  </div>
</header>

<!-- ribbon -->
<div class="flex h-[92px] shrink-0 bg-linear-to-b from-[#e9e9eb] via-[#dedede] to-[#cfcfcf] whitespace-nowrap [&_button]:flex [&_button]:items-center [&_button]:justify-center [&>section]:flex [&>section]:flex-col [&>section]:border-r [&>section]:border-[#f6f6f6] [&>section]:shadow-[inset_-1px_0_#c4c4c4]">
  <section class="w-28 shrink-0">
    <div class="flex h-[74px] pt-[5px]">
      <button class="ml-3 h-[54px] w-8 flex-col gap-1"><svg class="size-8"><use href="#sketch"/></svg><span class="leading-4">草图</span></button>
      <div class="ml-3.5 flex h-[66px] border border-[#bdbdbd]">
        <div class="flex w-8 flex-col"><button aria-label="轮廓" class="h-8"><svg class="h-[22px] w-[26px]"><use href="#spline"/></svg></button><button aria-label="矩形" class="h-8"><svg class="h-5 w-[26px]"><use href="#rect"/></svg></button></div>
        <div class="flex w-[15px] flex-col border-l border-[#bdbdbd] bg-[#e2e2e2] *:flex-1">
          <button aria-label="向上" class="border-b border-[#bdbdbd] text-[#aaa]"><svg class="h-[3px] w-1.5 rotate-180"><use href="#caret"/></svg></button>
          <button aria-label="向下" class="border-b border-[#bdbdbd]"><svg class="h-[3px] w-1.5"><use href="#caret"/></svg></button>
          <button aria-label="展开"><span class="border-t border-[#111] pt-0.5"><svg class="h-[3px] w-1.5"><use href="#caret"/></svg></span></button>
        </div>
      </div>
    </div>
    <div class="flex h-[18px] items-center text-[#333]"><span class="flex-1 text-center">直接草图</span><svg class="mr-2 mb-0.5 h-1 w-2"><use href="#caret"/></svg></div>
  </section>
  <section class="w-[201px] shrink-0">
    <div class="flex h-[74px] pl-3">
      <div class="grid grid-cols-2 content-start pt-0.5 [&>button]:h-[22px] [&>button]:w-[37px] [&>button]:justify-start [&>button]:gap-[7px]">
        <button aria-label="基准平面"><svg class="size-4"><use href="#plane"/></svg><svg class="h-[3px] w-1.5"><use href="#caret"/></svg></button>
        <button aria-label="凸台"><svg class="size-4"><use href="#boss"/></svg></button>
        <button aria-label="拉伸"><svg class="size-4"><use href="#extrude"/></svg><svg class="h-[3px] w-1.5"><use href="#caret"/></svg></button>
        <button aria-label="合并"><svg class="size-4"><use href="#unite"/></svg><svg class="h-[3px] w-1.5"><use href="#caret"/></svg></button>
        <button aria-label="孔"><svg class="size-4"><use href="#hole"/></svg></button>
        <button aria-label="抽壳"><svg class="size-4"><use href="#shell"/></svg></button>
      </div>
      <button class="mt-[5px] h-[54px] w-9 flex-col gap-1"><svg class="size-8"><use href="#blend"/></svg><span class="leading-4">边倒圆</span></button>
      <div class="flex w-[34px] flex-col pt-0.5 *:h-[22px]">
        <button aria-label="拔模"><svg class="size-4"><use href="#draft"/></svg></button>
        <button aria-label="修剪体"><svg class="size-4"><use href="#trim"/></svg></button>
        <button aria-label="缩放体"><svg class="size-4"><use href="#scale"/></svg></button>
      </div>
      <button class="mt-1 ml-0.5 w-[37px] flex-col justify-start!"><span class="mb-px flex h-9 w-[37px] items-center justify-center border border-[#c3c3c3] bg-[#e0e0e0]"><svg class="size-4"><use href="#more"/></svg></span><span class="leading-4">更多</span><svg class="mt-1 h-[3px] w-1.5"><use href="#caret"/></svg></button>
    </div>
    <div class="flex h-[18px] items-center text-[#333]"><span class="flex-1 text-center">特征</span><svg class="mr-2 mb-0.5 h-1 w-2"><use href="#caret"/></svg></div>
  </section>
  <section class="w-[127px] shrink-0">
    <div class="flex h-[74px] pl-[11px]">
      <button class="mt-[5px] h-[54px] w-9 flex-col gap-1"><svg class="size-8"><use href="#moveface"/></svg><span class="leading-4">移动面</span></button>
      <div class="flex w-[34px] flex-col pt-0.5 *:h-[22px]">
        <button aria-label="替换面"><svg class="size-4" viewBox="0 0 16 16"><use href="#face"/><path d="M8 7h3v6H8zM11 5h4v7h-4z" fill="#fff" stroke="#222"/></svg></button>
        <button aria-label="调整面大小"><svg class="size-4" viewBox="0 0 16 16"><use href="#face"/><path d="M9 7h6v3H9zM8 12h7v3H8z" fill="#fff" stroke="#222"/></svg></button>
        <button aria-label="删除面"><svg class="size-4" viewBox="0 0 16 16"><use href="#face"/><path d="M8 7l7 8M15 7l-7 8" stroke="#222" stroke-width="1.600"/></svg></button>
      </div>
      <button class="mt-1 ml-[3px] w-[37px] flex-col justify-start!"><span class="mb-px flex h-9 w-[37px] items-center justify-center border border-[#c3c3c3] bg-[#e0e0e0]"><svg class="size-5"><use href="#refresh"/></svg></span><span class="leading-4">更多</span><svg class="mt-1 h-[3px] w-1.5"><use href="#caret"/></svg></button>
    </div>
    <div class="flex h-[18px] items-center text-[#333]"><span class="flex-1 text-center">同步建模</span><svg class="mr-2 mb-0.5 h-1 w-2"><use href="#caret"/></svg></div>
  </section>
  <section class="w-[43px] shrink-0">
    <button class="mt-[5px] flex-col"><svg class="mb-1 size-8"><use href="#surface"/></svg><span class="leading-4">曲面</span><svg class="mt-1 h-[3px] w-1.5"><use href="#caret"/></svg></button>
  </section>
  <section class="w-[104px] shrink-0">
    <div class="h-[74px] pt-[7px] pl-1 [&_button]:w-[23px] [&>div]:flex [&>div]:h-[29px] [&>div]:items-center [&_i]:mx-[3px] [&_i]:h-7 [&_i]:w-px [&_i]:bg-[#f4f4f4]">
      <div><button aria-label="属性工具"><svg class="size-4"><use href="#attr"/></svg></button><button aria-label="图层"><svg class="size-4"><use href="#layers"/></svg></button><button aria-label="图层设置"><svg class="size-4"><use href="#layerdoc"/></svg></button><i></i><button aria-label="属性"><svg class="size-4"><use href="#hand"/></svg></button></div>
      <div><button aria-label="导入"><svg class="size-4"><use href="#greenblue"/></svg></button><button aria-label="清理"><svg class="size-4"><use href="#greenwing"/></svg></button><button aria-label="检查"><svg class="size-4"><use href="#greengold"/></svg></button><i></i><button aria-label="导出"><svg class="size-4"><use href="#export"/></svg></button></div>
    </div>
    <div class="flex h-[18px] items-center text-[#333]"><span class="flex-1 text-center">标准化工具 - ...</span><svg class="mr-2 mb-0.5 h-1 w-2"><use href="#caret"/></svg></div>
  </section>
  <section class="w-[52px] shrink-0">
    <div class="h-[74px] pt-[7px] pl-0.5 [&_button]:w-6 [&>div]:flex [&>div]:h-[29px] [&>div]:items-center">
      <div><button aria-label="柱齿轮"><svg class="h-4 w-[18px]"><use href="#gear1"/></svg></button><button aria-label="锥齿轮"><svg class="h-4 w-[18px]"><use href="#gear2"/></svg></button></div>
      <div><button aria-label="显示齿轮"><svg class="h-4 w-[18px]"><use href="#gearfind"/></svg></button></div>
    </div>
    <div class="flex h-[18px] items-center text-[#333]"><span class="flex-1 text-center">齿轮...</span><svg class="mr-2 mb-0.5 h-1 w-2"><use href="#caret"/></svg></div>
  </section>
  <section class="w-[58px] shrink-0">
    <div class="h-[74px] pt-[7px] pl-0.5 [&_button]:w-6 [&>div]:flex [&>div]:h-[29px] [&>div]:items-center">
      <div><button aria-label="圆柱压缩弹簧"><svg class="size-4"><use href="#spring"/></svg></button><button aria-label="圆柱拉伸弹簧"><svg class="size-4"><use href="#spring2"/></svg></button></div>
      <div><button aria-label="碟簧"><svg class="size-4"><use href="#disc"/></svg></button><span class="mx-[3px] h-7 w-px bg-[#f4f4f4]"></span><button aria-label="删除弹簧"><svg class="size-4"><use href="#delspring"/></svg></button></div>
    </div>
    <div class="flex h-[18px] items-center text-[#333]"><span class="flex-1 text-center">弹簧...</span><svg class="mr-2 mb-0.5 h-1 w-2"><use href="#caret"/></svg></div>
  </section>
  <section class="w-[52px] shrink-0">
    <div class="h-[74px] pt-[7px] pl-0.5 [&_button]:w-6 [&>div]:flex [&>div]:h-[29px] [&>div]:items-center">
      <div><button aria-label="加工准备"><svg class="h-4 w-[18px]"><use href="#chkgreen"/></svg></button><button aria-label="电极"><svg class="h-4 w-[18px]"><use href="#cadimg"/></svg></button></div>
      <div><button aria-label="表格"><svg class="size-4"><use href="#grid"/></svg></button><button aria-label="坐标系"><svg class="size-4"><use href="#csys"/></svg></button></div>
    </div>
    <div class="flex h-[18px] items-center text-[#333]"><span class="flex-1 text-center">加工...</span><svg class="mr-2 mb-0.5 h-1 w-2"><use href="#caret"/></svg></div>
  </section>
  <section class="w-[98px] shrink-0">
    <div class="h-[74px] pt-[7px] pl-[3px] [&_button]:w-[23px] [&>div]:flex [&>div]:h-[29px] [&>div]:items-center">
      <div><button aria-label="三角"><svg class="size-4"><use href="#tri"/></svg></button><button aria-label="表达式"><svg class="size-4"><use href="#tbl"/></svg></button><button aria-label="重用"><svg class="size-4"><use href="#orgpart"/></svg></button><button aria-label="配置"><svg class="size-4"><use href="#cfgpart"/></svg></button></div>
      <div><button aria-label="注释"><svg class="size-4"><use href="#note"/></svg></button><button aria-label="尺寸刷"><svg class="size-4"><use href="#dimbrush"/></svg></button><span class="mx-[3px] h-7 w-px bg-[#f4f4f4]"></span><button aria-label="公差查询"><svg class="size-[18px]"><use href="#find10"/></svg></button></div>
    </div>
    <div class="flex h-[18px] items-center text-[#333]"><span class="flex-1 text-center">建模工具 - G...</span><svg class="mr-2 mb-0.5 h-1 w-2"><use href="#caret"/></svg></div>
  </section>
  <section class="w-[29px] shrink-0">
    <div class="h-[74px] pt-[7px] *:h-[29px] *:w-full">
      <button aria-label="部件加载"><svg class="h-4 w-[18px]"><use href="#cubes"/></svg></button>
      <button aria-label="部件替换"><svg class="h-4 w-[18px]"><use href="#cubes"/></svg></button>
    </div>
    <div class="flex h-[18px] items-center text-[#333]"><span class="flex-1 text-center">β.</span><svg class="mr-2 mb-0.5 h-1 w-2"><use href="#caret"/></svg></div>
  </section>
  <section class="min-w-[288px] flex-1">
    <div class="h-[74px] pt-[7px] pl-[3px] font-['Liberation_Sans',sans-serif] text-[7px] leading-[7px] font-bold [&_button]:w-[23px] [&_button]:flex-col [&>div]:flex [&>div]:h-[29px] [&>div]:items-center">
      <div>
        <button aria-label="尺寸样式"><svg class="h-4 w-[18px]"><use href="#dimstep"/></svg></button><span class="mx-[3px] h-7 w-px bg-[#f4f4f4]"></span>
        <button>1.00</button>
        <button>1.00<span class="text-[#b83a34]">±.00</span></button>
        <button>1.00<span class="text-[#b83a34]">+.00</span><span class="text-[#b83a34]">-.00</span></button>
        <button>1.00<span class="text-[#b83a34]">+.00</span><span class="text-[#777]">-.00</span></button>
        <button>1.00<span class="text-[#777]">+.00</span><span class="text-[#b83a34]">-.00</span></button>
        <button><span class="border border-[#b82424] px-px">1.00</span></button>
        <button><span><span class="text-[#b82424]">(</span>1.00<span class="text-[#b82424]">)</span></span></button>
        <button class="text-[#2438b0]">10H7</button>
        <button class="text-[#2438b0]">10H7<span class="text-[6px]">[8.01]</span></button>
        <button class="text-[#2438b0]">10H7<span class="text-[6px]">[8.015]</span></button>
        <button class="text-[#2438b0]">10<span class="text-[6px]">[8.015]</span></button>
      </div>
      <div><button aria-label="角度标注"><svg class="size-4"><use href="#dimang"/></svg></button><button aria-label="引线标注"><svg class="h-4 w-[18px]"><use href="#dimlead"/></svg></button><span class="mx-[3px] h-7 w-px bg-[#f4f4f4]"></span><button aria-label="半径"><svg class="size-4"><use href="#dia1"/></svg></button><button aria-label="直径"><svg class="size-4"><use href="#dia2"/></svg></button><button aria-label="还原"><svg class="size-4"><use href="#swap"/></svg></button></div>
    </div>
    <div class="flex h-[18px] items-center text-[#333]"><span class="flex-1 text-center">尺寸标注样式 - GC 工具箱</span><svg class="mr-2 mb-0.5 h-1 w-2"><use href="#caret"/></svg></div>
  </section>
  <section class="w-[137px] shrink-0">
    <div class="flex h-[74px] pl-3">
      <button disabled class="mt-[7px] h-[52px] w-12 flex-col gap-1 text-[#a0a0a0]"><svg class="h-[30px] w-8" viewBox="0 0 32 30"><path d="M1 1h30v28H1z" fill="#989898" stroke="#858585"/><path d="M6 14l4-2v8l-4 2zM13 10l5-3 3 3v10l-8 3zM20 14l7-2v8l-7 3z" fill="#808080" stroke="#aaa" stroke-width=".8"/></svg><span class="leading-4">处理装配</span></button>
      <button class="mt-[5px] ml-1.5 w-9 flex-col justify-start!"><svg class="mb-[5px] size-8"><use href="#asmadd"/></svg><span class="leading-4">添加</span><svg class="mt-[3px] h-[3px] w-1.5"><use href="#caret"/></svg></button>
      <div class="flex w-8 flex-col pt-0.5 *:h-[22px]">
        <button aria-label="镜像装配"><svg class="size-4"><use href="#mirror"/></svg></button>
        <button aria-label="移动组件"><svg class="size-4"><use href="#rotcube"/></svg></button>
        <button aria-label="新建组件"><svg class="size-4"><use href="#cubeplus"/></svg></button>
      </div>
    </div>
    <div class="flex h-[18px] items-center text-[#333]"><span class="flex-1 text-center">装配</span><svg class="mr-2 mb-0.5 h-1 w-2"><use href="#caret"/></svg></div>
  </section>
  <div class="flex w-[38px] shrink-0 items-end justify-end pr-1.5 pb-2"><svg class="h-[3px] w-1.5"><use href="#caret"/></svg></div>
</div>

<!-- selection bar -->
<div class="flex h-[31px] shrink-0 items-center border-t border-b border-t-[#a6a6a6] border-b-[#9c9c9c] bg-linear-to-b from-[#cdcdcd] to-[#dcdcdc] pb-1 [&>button]:flex [&>button]:h-6 [&>button]:w-[25px] [&>button]:items-center [&>button]:justify-center">
  <button class="ml-2.5 w-auto! gap-[3px]"><svg class="size-4"><use href="#menu"/></svg>菜单(M)<svg class="h-[3px] w-1.5"><use href="#caret"/></svg></button>
  <span class="mx-[7px] h-6 w-px bg-[#f2f2f2]"></span>
  <label class="relative ml-1">
    <select aria-label="类型过滤器" class="block h-5 w-[147px] appearance-none border border-[#777] bg-white leading-4"><option>实体</option></select>
    <span class="pointer-events-none absolute top-px right-px flex h-[18px] w-4 items-center justify-center border border-[#2f5f9c] bg-[#8fbbea]"><svg class="h-1.5 w-2.5" viewBox="0 0 8 4"><use href="#caret"/></svg></span>
  </label>
  <label class="relative mr-[5px] ml-2.5">
    <select aria-label="选择范围" class="block h-5 w-[155px] appearance-none border border-[#777] bg-white leading-4"><option>整个装配</option></select>
    <span class="pointer-events-none absolute top-px right-px flex h-[18px] w-4 items-center justify-center border border-[#2f5f9c] bg-[#8fbbea]"><svg class="h-1.5 w-2.5" viewBox="0 0 8 4"><use href="#caret"/></svg></span>
  </label>
  <button aria-label="装配过滤"><svg class="h-4 w-[18px]"><use href="#grayasm"/></svg></button>
  <button aria-label="重置过滤器"><svg class="size-4"><use href="#bluegold"/></svg></button>
  <button aria-label="选择意图"><svg class="size-[18px]"><use href="#redbox"/></svg></button>
  <svg class="mr-1 h-[3px] w-1.5"><use href="#caret"/></svg>
  <button aria-label="类选择"><svg class="size-4"><use href="#hand"/></svg></button>
  <button aria-label="捕捉"><svg class="size-4"><use href="#anchor"/></svg></button>
  <button aria-label="弯曲"><svg class="size-4"><use href="#bend"/></svg></button>
  <button aria-label="矩形选择"><svg class="h-4 w-[18px]"><use href="#marquee"/></svg></button>
  <svg class="mr-1.5 ml-px h-[3px] w-1.5"><use href="#caret"/></svg>
  <button aria-label="隐藏边"><svg class="h-4 w-[18px]"><use href="#wirecube"/></svg></button>
  <button aria-label="着色"><svg class="size-4"><use href="#bcube"/></svg></button>
  <button aria-label="启用捕捉点"><svg class="h-4 w-[18px]"><use href="#snap"/></svg></button>
  <button aria-label="清除捕捉"><svg class="size-4"><use href="#gmove"/></svg></button>
  <button aria-label="端点"><svg class="size-4"><use href="#line1"/></svg></button>
  <button aria-label="中点"><svg class="size-4"><use href="#line2"/></svg></button>
  <button aria-label="控制点"><svg class="size-4"><use href="#curve"/></svg></button>
  <button aria-label="交点"><svg class="size-4"><use href="#arrowup"/></svg></button>
  <button aria-label="圆弧中心"><svg class="size-4"><use href="#target"/></svg></button>
  <button aria-label="象限点"><svg class="size-4"><use href="#quad"/></svg></button>
  <button aria-label="现有点"><svg class="size-4"><use href="#cross"/></svg></button>
  <button aria-label="曲线上的点"><svg class="size-4"><use href="#linept"/></svg></button>
  <button aria-label="面上的点"><svg class="size-4"><use href="#gface"/></svg></button>
  <button aria-label="有界栅格"><svg class="size-4"><use href="#ggrid"/></svg></button>
  <span class="mx-1.5 h-6 w-px bg-[#f2f2f2]"></span>
  <button aria-label="添加组件"><svg class="size-4"><use href="#gasm"/></svg></button>
  <button aria-label="新建父对象"><svg class="size-4"><use href="#gasm"/></svg></button>
  <button aria-label="替换组件"><svg class="size-4"><use href="#pale"/></svg></button>
  <button aria-label="阵列组件"><svg class="size-4"><use href="#cubeplus"/></svg></button>
  <button aria-label="装配约束"><svg class="h-4 w-[18px]"><use href="#gframe"/></svg></button>
  <span class="mx-1.5 h-6 w-px bg-[#f2f2f2]"></span>
  <svg class="mr-1.5 ml-auto h-[3px] w-1.5 self-end"><use href="#caret"/></svg>
</div>

<main class="flex min-h-0 flex-1">
  <!-- resource bar -->
  <nav class="flex w-[33px] shrink-0 flex-col items-end gap-0.5 border-r border-[#666] bg-linear-to-r from-[#a3a3a3] to-[#b6b6b6] pt-4 *:flex *:h-10 *:w-[26px] *:items-center *:justify-center *:rounded-l-sm *:border *:border-r-0 *:border-[#777] *:bg-[#dadada]">
    <button aria-label="装配导航器"><svg class="size-6"><use href="#r-asm"/></svg></button>
    <button aria-label="约束导航器"><svg class="size-6"><use href="#r-con"/></svg></button>
    <button aria-label="部件导航器" class="-mr-px w-7! bg-[#efefef]!"><svg class="size-6"><use href="#r-part"/></svg></button>
    <button aria-label="重用库"><svg class="size-6"><use href="#r-lib"/></svg></button>
    <button aria-label="HD3D 工具" class="mt-3"><svg class="size-6"><use href="#r-info"/></svg></button>
    <button aria-label="Web 浏览器" class="mt-3"><svg class="size-6"><use href="#r-web"/></svg></button>
    <button aria-label="历史记录" class="mt-3"><svg class="size-6"><use href="#clock"/></svg></button>
    <button aria-label="系统材料"><svg class="size-6"><use href="#r-pal"/></svg></button>
    <button aria-label="可视化"><svg class="size-6"><use href="#r-color"/></svg></button>
    <button aria-label="加工向导"><svg class="size-6"><use href="#r-proc"/></svg></button>
    <button aria-label="角色"><svg class="size-6"><use href="#r-role"/></svg></button>
    <button aria-label="系统场景"><svg class="size-6"><use href="#r-sys"/></svg></button>
  </nav>

  <!-- part navigator -->
  <aside class="flex w-[409px] shrink-0 flex-col border-r border-b border-[#555] bg-[#ececec] pr-[9px] pb-1 pl-[9px]">
    <h2 class="flex h-[30px] items-center gap-2.5 pl-[5px] text-[13px] font-bold"><svg class="size-3"><use href="#pin"/></svg>部件导航器</h2>
    <div class="flex min-h-0 flex-1 flex-col border border-[#555] bg-white">
      <div class="min-h-0 flex-1 overflow-hidden">
        <table class="w-full table-fixed border-collapse [&_td]:h-5 [&_td]:border-r [&_td]:border-b [&_td]:border-[#e6e6e6] [&_td]:p-0 [&_td]:leading-4 [&_td]:whitespace-nowrap [&_td:last-child]:border-r-0 [&_tr:nth-child(even)]:bg-[#f7f7f7]">
          <colgroup><col class="w-[200px]" /><col class="w-[100px]" /><col /></colgroup>
          <thead class="bg-linear-to-b from-white to-[#dcdcdc]">
            <tr class="*:h-5 *:border-r *:border-b *:border-[#b0b0b0] *:px-[5px] *:py-0 *:text-left *:leading-4 *:font-normal">
              <th><span class="flex items-center gap-4">名称<svg class="h-[5px] w-2.5 rotate-180" viewBox="0 0 8 4"><use href="#caret"/></svg></span></th><th>最新</th><th>附注</th>
            </tr>
          </thead>
          <tbody id="tree">
            <tr><td><div class="flex h-[19px] items-center pl-[10px]"><span class="mr-1 w-1.5 border-t border-dotted border-[#999]"></span><svg class="mr-[3px] size-4"><use href="#clock"/></svg>历史记录模式</div></td><td></td><td></td></tr>
            <tr><td><div class="flex h-[19px] items-center pl-[5px]"><button aria-label="展开" class="flex size-[9px] items-center justify-center rounded-xs border border-[#888] bg-white"><svg class="size-[5px]" viewBox="0 0 5 5"><path d="M0 2h5v1H0zM2 0h1v5H2z"/></svg></button><span class="w-[5px] border-t border-dotted border-[#999]"></span><svg class="mr-[3px] size-4"><use href="#mview"/></svg>模型视图</div></td><td></td><td></td></tr>
            <tr><td><div class="flex h-[19px] items-center pl-[5px]"><button aria-label="展开" class="flex size-[9px] items-center justify-center rounded-xs border border-[#888] bg-white"><svg class="size-[5px]" viewBox="0 0 5 5"><path d="M0 2h5v1H0zM2 0h1v5H2z"/></svg></button><span class="mr-[3px] w-1 border-t border-dotted border-[#999]"></span><svg class="mr-0.5 size-[14px]"><use href="#check"/></svg><svg class="mr-[3px] size-[14px]"><use href="#camera"/></svg>摄像机</div></td><td></td><td></td></tr>
            <tr><td><div class="flex h-[19px] items-center pl-[5px]"><button aria-label="折叠" class="flex size-[9px] items-center justify-center rounded-xs border border-[#888] bg-white"><svg class="size-[5px]" viewBox="0 0 5 5"><path d="M0 2h5v1H0z"/></svg></button><span class="w-[5px] border-t border-dotted border-[#999]"></span><svg class="mr-[3px] size-4"><use href="#folder"/></svg>模型历史记录</div></td><td></td><td></td></tr>
            <tr><td><label class="flex h-[19px] items-center pl-[29px]"><span class="-my-px h-5 w-px border-l border-dotted border-[#999]"></span><span class="mr-px w-[10px] border-t border-dotted border-[#999]"></span><span class="relative mr-0.5 size-3"><input type="checkbox" checked class="block size-3 appearance-none border border-black bg-white" /><svg class="pointer-events-none absolute inset-px size-2.5"><use href="#check"/></svg></span><svg class="mr-0.5 size-4"><use href="#csys"/></svg><span class="text-[#333]">基准坐标系 (0)</span></label></td><td><svg class="ml-[5px] size-[14px]"><use href="#check"/></svg></td><td></td></tr>
            <tr><td><label class="flex h-[19px] items-center pl-[29px]"><span class="h-2.5 w-px self-start border-l border-dotted border-[#999]"></span><span class="mr-px w-[10px] border-t border-dotted border-[#999]"></span><span class="relative mr-0.5 size-3"><input type="checkbox" checked class="block size-3 appearance-none border border-black bg-white" /><svg class="pointer-events-none absolute inset-px size-2.5"><use href="#check"/></svg></span><svg class="mr-[3px] size-4"><use href="#bcube"/></svg><b>块 (1)</b></label></td><td><svg class="ml-[5px] size-[14px]"><use href="#check"/></svg></td><td></td></tr>
          </tbody>
        </table>
      </div>
      <div class="flex h-[18px] shrink-0 items-center bg-[#f0f0f0] pr-1.5 pl-1.5">
        <svg class="mr-1 h-2.5 w-2" viewBox="0 0 8 10"><path d="M6 1L2 5l4 4" fill="none" stroke="#444" stroke-width="2"/></svg>
        <div class="mr-4 h-[15px] flex-1 bg-[#cbcbcb]"></div>
        <svg class="h-2.5 w-2" viewBox="0 0 8 10"><path d="M2 1l4 4-4 4" fill="none" stroke="#444" stroke-width="2"/></svg>
      </div>
    </div>
    <div class="flex h-3 items-center"><span class="h-px flex-1 bg-[#bbb]"></span><span class="mx-1 h-[5px] w-[70px] border-r border-b border-[#999] bg-[#d6d6d6]"></span><span class="h-px flex-1 bg-[#bbb]"></span></div>
    <div class="*:flex *:h-[23px] *:w-full *:items-center *:border-r *:border-b *:border-[#999] *:bg-linear-to-b *:from-[#fbfbfb] *:to-[#dadada] *:pl-1.5 *:font-bold">
      <button><span class="pt-0.5">相依性</span><span class="ml-auto flex h-full w-6 items-center justify-center border-l border-[#bbb]"><svg class="h-2.5 w-3"><use href="#chev"/></svg></span></button>
      <button><span class="pt-0.5">细节</span><span class="ml-auto flex h-full w-6 items-center justify-center border-l border-[#bbb]"><svg class="h-2.5 w-3"><use href="#chev"/></svg></span></button>
      <button><span class="pt-0.5">预览</span><span class="ml-auto flex h-full w-6 items-center justify-center border-l border-[#bbb]"><svg class="h-2.5 w-3"><use href="#chev"/></svg></span></button>
    </div>
  </aside>

  <!-- graphics window -->
  <div class="relative min-w-0 flex-1 overflow-hidden bg-linear-to-b from-[#b3b5b5] via-[#d3d5d6] via-55% to-[#e8eaec]">
    <p class="absolute top-[66px] left-[53px] font-['Noto_Sans','Noto_Sans_CJK_SC',sans-serif] text-[44px] leading-[60px] font-light whitespace-nowrap text-black">Caesar卢尚宇</p>
    <svg class="absolute top-[200px] left-[254px] h-[330px] w-[310px] font-['Open_Sans',sans-serif]" viewBox="700 380 310 330">
      <g stroke="#3a2600" stroke-width="1" stroke-linejoin="round">
        <path d="M710 455l157-66 115 74-158 67z" fill="#ffc500"/>
        <path d="M710 455l114 75 12 167-115-74z" fill="#a66200"/>
        <path d="M824 530l158-67 11 168-157 66z" fill="#c57300"/>
      </g>
      <path d="M718 565l53-22 4 57 39 26-54 22M721 623l98-41" fill="none" stroke="#e3c69a"/>
      <path d="M774 598h3v3h-3z" fill="#fff"/>
      <path d="M717 565l39 26 4 57" fill="none" stroke="#2a2a9c" stroke-width="1.500"/>
      <path d="M714 518l7 110M716 623h9M713 508l4 15h-6z" stroke="#1a2cc8" fill="#1a2cc8"/>
      <path d="M827 578l-13 3 4 4z" fill="#d9f2ee" stroke="#fff"/>
      <path d="M787 665l14 9-13-3z" fill="#1a2cc8" stroke="#1a2cc8" stroke-width="2"/>
      <text x="709" y="508" font-size="10" fill="#1a2cc8">Z</text>
      <text x="831" y="580" font-size="10" fill="#eee">Y</text>
      <text x="800" y="682" font-size="10" fill="#1a2cc8">X</text>
    </svg>
    <svg class="absolute bottom-8 left-[44px] h-[75px] w-[60px] font-['Open_Sans',sans-serif]" viewBox="490 780 60 75">
      <path d="M505 807l15-8 17 9-1 18-17 9-14-8z" fill="#c4c7c9" stroke="#b0b3b5"/>
      <path d="M505 807l15 8 17-7M520 815v19M505 826l15-8 16 8M520 799v19" fill="none" stroke="#dadcdd"/>
      <path d="M505 828l30-14" stroke="#999" stroke-width="1.500"/>
      <path d="M503 828l-1-26" stroke="#1430c8" stroke-width="3"/><path d="M502 793l4 12h-7z" fill="#1430c8"/>
      <path d="M504 829l14 8" stroke="#e0602a" stroke-width="3"/><path d="M527 842l-12-2 4-6z" fill="#d8281a"/>
      <circle cx="503" cy="828" r="3.500" fill="#c9ccb9" stroke="#888"/>
      <text x="498" y="794" font-size="10" fill="#2a6ad0">Z</text>
      <text x="537" y="817" font-size="9" fill="#444">Y</text>
      <text x="527" y="849" font-size="9" fill="#c8402c">X</text>
    </svg>
  </div>
</main>

<!-- status bar -->
<footer class="flex h-6 shrink-0 items-center border-t border-[#f4f4f4] bg-[#d8d8d8]">
  <span class="w-[613px] self-stretch border-r border-[#f2f2f2]"></span>
  <span class="flex-1 self-stretch border-r border-[#f2f2f2]"></span>
  <span class="w-5 self-stretch border-r border-[#f2f2f2]"></span>
  <span class="w-9 self-stretch border-r border-[#f2f2f2]"></span>
  <svg class="ml-[3px] size-4" viewBox="0 0 16 16"><path d="M0 0h16v16H0z" fill="#8c8c90"/><path d="M6 3v10M9 4h4M9 8h4" stroke="#747478"/></svg>
  <svg class="mr-4.5 ml-1 size-4" viewBox="0 0 16 16"><path d="M1 1h14v14H1z" fill="#f4f4f4" stroke="#777"/><path d="M4 4h9v8H4z" fill="#3a62d0" stroke="#1e3f48" stroke-width="1.400"/><path d="M6 6h5v3H6z" fill="#a8c8ff"/></svg>
</footer>

<script>
  // fill the rest of the navigator with empty rows
  const tree = document.getElementById("tree");
  for (let i = 0; i < 60; i++) {
    const row = document.createElement("tr");
    row.innerHTML = "<td></td><td></td><td></td>";
    tree.appendChild(row);
  }
</script>
</body>
</html>
